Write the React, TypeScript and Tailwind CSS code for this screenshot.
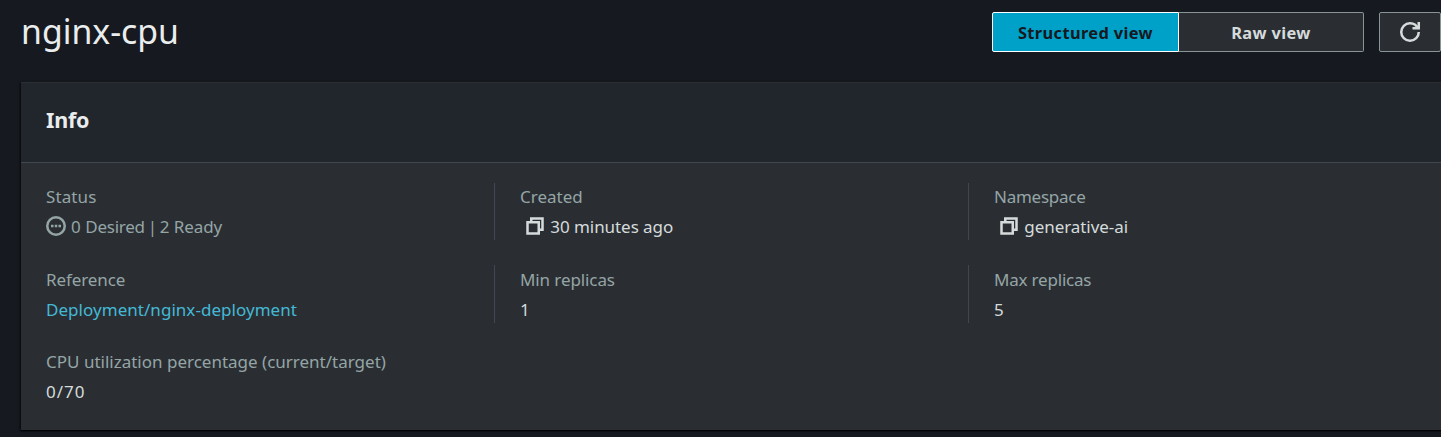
import type { ReactNode } from "react";

function CopyIcon() {
  return (
    <svg viewBox="0 0 16 16" className="h-5 w-5 shrink-0 fill-none stroke-[#d5dbdb] stroke-2">
      <path d="M2 5h9v9H2z" />
      <path d="M5 5V2h9v9h-3" />
    </svg>
  );
}

function PendingIcon() {
  return (
    <svg viewBox="0 0 16 16" className="mr-[5px] h-5 w-5 shrink-0 fill-none stroke-[#95a5a6]">
      <circle cx="8" cy="8" r="7" strokeWidth="2" />
      <path d="M4 8h2M7 8h2M10 8h2" strokeWidth="2" />
    </svg>
  );
}

function RefreshIcon() {
  return (
    <svg viewBox="0 0 16 16" className="h-5 w-5 fill-none stroke-[#d5dbdb] stroke-2">
      <path d="M10 5h5V0" />
      <path d="M15 8a6.957 6.957 0 0 1-7 7 6.957 6.957 0 0 1-7-7 6.957 6.957 0 0 1 7-7 6.870 6.870 0 0 1 6.300 4" />
    </svg>
  );
}

function Field({ label, divided, children }: { label: ReactNode; divided?: boolean; children: ReactNode }) {
  return (
    <div className={divided ? "h-[57.4px] border-l border-[#414750] pl-[25px]" : "h-[57.4px] pl-[25px]"}>
      <div className="h-[30px] pt-[0.2px] text-[#95a5a6] leading-[27px]">{label}</div>
      <div className="flex h-[27px] items-start pt-[0.2px] leading-[27px]">{children}</div>
    </div>
  );
}

function CopyValue({ children }: { children: ReactNode }) {
  return (
    <>
      <span className="mr-[5px] ml-[5px] flex pt-[2.8px]"><CopyIcon /></span>
      <span className="pl-[0.3px] tracking-[-0.06px]">{children}</span>
    </>
  );
}

export default function App() {
  return (
    <div className="h-[437px] w-[1441px] overflow-hidden bg-[#16191f] font-['Noto_Sans',sans-serif] text-[17px] text-[#d5dbdb]">
      <header className="flex h-[82px] items-start justify-between pl-[21px]">
        <h1 className="pt-[9px] text-[33.8px] leading-[45px] text-[#eaeded]">nginx-cpu</h1>
        <div className="flex pt-3 text-[16.4px] font-bold tracking-[0.37px]">
          <button className="h-10 w-[187px] rounded-l-[2px] border border-white bg-[#00a1c9] pt-[3px] text-[#16191f]">Structured view</button>
          <button className="h-10 w-[185px] rounded-r-[2px] border border-l-0 border-[#879596] bg-[#2a2e33] pt-[3px]">Raw view</button>
          <button aria-label="Refresh" className="ml-[15px] flex h-10 w-[62px] items-center justify-center rounded-[2px] border border-[#879596] bg-[#2a2e33]">
            <RefreshIcon />
          </button>
        </div>
      </header>
      <section className="ml-[21px] h-[348px] bg-[#2a2e33] shadow-[0_1px_1px_#000000b0,1px_1px_2px_#00000080,-1px_1px_2px_#00000080]">
        <div className="flex h-[81px] items-center border-t border-b border-t-[#2a2e33] border-b-[#414750] bg-[#21252c] pb-1 pl-[25px]">
          <h2 className="text-[21.5px] font-bold tracking-[-0.2px] text-[#eaeded]">Info</h2>
        </div>
        <div className="grid grid-cols-[473px_474px_473px] grid-rows-[82.4px_82.4px_82.4px] pt-5">
          <Field label={<span className="tracking-[0.1px]">Status</span>}>
            <span className="flex pt-[2.8px]"><PendingIcon /></span>
            <span className="flex gap-[4.5px] text-[#95a5a6]">
              <span>0</span>
              <span className="tracking-[-0.25px]">Desired</span>
              <span className="-mx-[1.5px]">|</span>
              <span className="-ml-[0.5px]">2</span>
              <span className="tracking-[-0.1px]">Ready</span>
            </span>
          </Field>
          <Field label="Created" divided><CopyValue>30 minutes ago</CopyValue></Field>
          <Field label={<span className="tracking-[-0.25px]">Namespace</span>} divided><CopyValue>generative-ai</CopyValue></Field>
          <Field label={<span className="tracking-[-0.1px]">Reference</span>}><a href="#" className="tracking-[0.04px] text-[#44b9d6]">Deployment/nginx-deployment</a></Field>
          <Field label={<span className="tracking-[-0.1px]">Min replicas</span>} divided>1</Field>
          <Field label={<span className="tracking-[-0.2px]">Max replicas</span>} divided>5</Field>
          <Field label="CPU utilization percentage (current/target)"><span className="tracking-[1px]">0/70</span></Field>
        </div>
      </section>
    </div>
  );
}
